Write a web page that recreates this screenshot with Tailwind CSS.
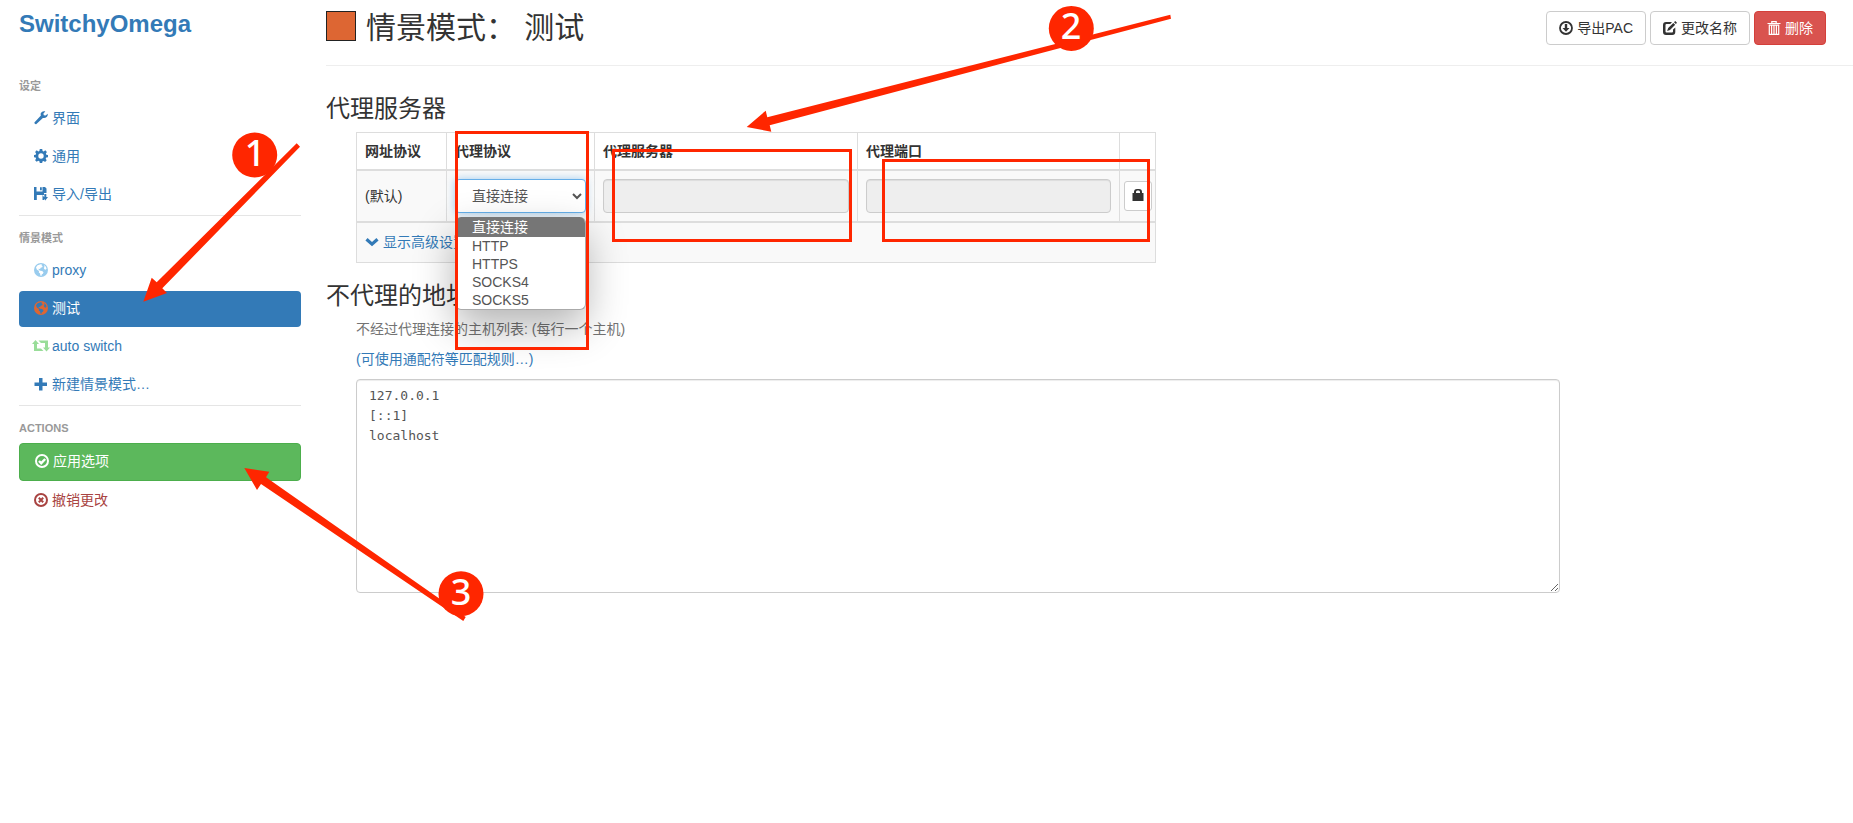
<!DOCTYPE html>
<html lang="zh-CN">
<head>
    <meta charset="UTF-8">
    <meta name="viewport" content="width=device-width, initial-scale=1.0">
    <title>SwitchyOmega</title>
    <script src="https://cdn.jsdelivr.net/npm/@tailwindcss/browser@4"></script>
</head>
<body class="relative flex min-h-screen bg-white font-['Liberation_Sans','Noto_Sans_CJK_SC',sans-serif] text-sm leading-5 text-[#333]">

    <!-- Sidebar -->
    <aside class="ml-[19px] w-[282px] shrink-0">
        <h1 class="h-[66px] pt-2 text-2xl leading-8 font-bold text-[#337ab7]"><a href="#">SwitchyOmega</a></h1>
        <nav class="flex flex-col gap-0.5 text-[#337ab7]">
            <h2 class="h-[33px] pt-2 text-[11px] leading-[25px] font-bold text-[#999]">设定</h2>
            <a href="#ui" class="flex h-9 items-center gap-1 rounded px-[15px] pb-0.5">
                <svg class="size-3.5" viewBox="0 0 14 14" fill="currentColor"><path d="M13.7 2.8 11.6 4.6 9.8 4.2 9.4 2.4 11.3.4C9.6-.3 7.6.4 6.9 2.1c-.4.9-.3 1.7 0 2.500L.6 11.3c-.8.8.9 2.6 1.8 1.8l6.500-6.200c2.600.8 5.300-1.300 4.800-4.100z"/></svg>
                界面
            </a>
            <a href="#general" class="flex h-9 items-center gap-1 rounded px-[15px] pb-0.5">
                <svg class="size-3.5" viewBox="0 0 14 14" fill="currentColor" fill-rule="evenodd"><path d="M5.8 0h2.4l.4 1.9 1.1.5 1.6-1.1 1.6 1.7-1 1.6.4 1.1 1.7.3v2.2l-1.8.4-.5 1.1 1 1.6-1.6 1.6-1.5-1-1.2.5L8.2 14H5.8l-.4-1.7-1.2-.5-1.5 1-1.6-1.6 1-1.6-.5-1.1L0 8.2V6l1.7-.3.4-1.1-1-1.6 1.6-1.7 1.6 1.1 1.1-.5zM7 4.3a2.7 2.7 0 1 0 0 5.4 2.7 2.7 0 0 0 0-5.4z"/></svg>
                通用
            </a>
            <a href="#io" class="flex h-9 items-center gap-1 rounded px-[15px] pb-0.5">
                <svg class="size-3.5" viewBox="0 0 14 14" fill="currentColor"><path d="M0 0h2.5v4.5h6V0H11l1.5 1.5V6H10v2H8.5L10 10v3H8.5V8H2.8v5H0zM6 .3h1.8v3H6zM10.3 7h2v3H14l-2.7 3.6L8.6 10h1.7z"/></svg>
                导入/导出
            </a>
            <hr class="border-[#e5e5e5]">
            <h2 class="h-[33px] pt-2 text-[11px] leading-[25px] font-bold text-[#999]">情景模式</h2>
            <a href="#proxy" class="flex h-9 items-center gap-1 rounded px-[15px] pb-0.5">
                <svg class="size-3.5 text-[#99ccee]" viewBox="0 0 14 14" fill="currentColor" fill-rule="evenodd"><path d="M7 0a7 7 0 1 0 0 14A7 7 0 0 0 7 0zM6.6 1.2 8 1.4 7.6 2.6 8.6 3l-.4 1.2-1.6.5-.5 1.3-1.5-.2.2 1.3 1.6.6 1.7.3 1.4 1.3-.6 1.5-1.2.8-.3 1.3-1-.3-.3-2-1.3-1.2.2-1.5L2.8 6.6 2 4.3l1.6-2zM10 2l1.7 1.5.9 2-.9 1.3-1.2-.6-.8-1.3.8-1z"/></svg>
                proxy
            </a>
            <a href="#test" class="flex h-9 items-center gap-1 rounded bg-[#337ab7] px-[15px] pb-0.5 text-white">
                <svg class="size-3.5 text-[#dd6633]" viewBox="0 0 14 14" fill="currentColor" fill-rule="evenodd"><path d="M7 0a7 7 0 1 0 0 14A7 7 0 0 0 7 0zM6.6 1.2 8 1.4 7.6 2.6 8.6 3l-.4 1.2-1.6.5-.5 1.3-1.5-.2.2 1.3 1.6.6 1.7.3 1.4 1.3-.6 1.5-1.2.8-.3 1.3-1-.3-.3-2-1.3-1.2.2-1.5L2.8 6.6 2 4.3l1.6-2zM10 2l1.7 1.5.9 2-.9 1.3-1.2-.6-.8-1.3.8-1z"/></svg>
                测试
            </a>
            <a href="#auto" class="flex h-9 items-center gap-0.5 rounded px-[13px] pb-0.5">
                <svg class="h-3 w-[18px] text-[#99dd99]" viewBox="0 0 18 12" fill="currentColor"><path d="M3.5 0 7 4H5v4.5h4L11.5 11H2V4H0zM6.5.5H16v7h2l-3.500 4L11 7.500h2V3H9z"/></svg>
                auto switch
            </a>
            <a href="#new" class="flex h-9 items-center gap-1 rounded px-[15px] pb-0.5">
                <svg class="size-3.5" viewBox="0 0 14 14" fill="currentColor"><path d="M5 1h3.5v4.5H13V9H8.5v4.5H5V9H.5V5.5H5z"/></svg>
                新建情景模式…
            </a>
            <hr class="border-[#e5e5e5]">
            <h2 class="h-[33px] pt-2 text-[11px] leading-[25px] font-bold text-[#999]">ACTIONS</h2>
            <button type="button" class="flex h-[38px] items-center gap-1 rounded border border-[#4cae4c] bg-[#5cb85c] px-[15px] pb-0.5 text-white">
                <svg class="size-3.5" viewBox="0 0 14 14" fill="none" stroke="currentColor" stroke-width="2"><circle cx="7" cy="7" r="6"/><path d="m4 7 2.2 2.2L10.200 5" stroke-width="2.4"/></svg>
                应用选项
            </button>
            <a href="#revert" class="flex h-9 items-center gap-1 rounded px-[15px] pb-0.5 text-[#a94442]">
                <svg class="size-3.5" viewBox="0 0 14 14" fill="none" stroke="currentColor" stroke-width="2"><circle cx="7" cy="7" r="6"/><path d="m4.8 4.8 4.4 4.4M9.2 4.8 4.8 9.2"/></svg>
                撤销更改
            </a>
        </nav>
    </aside>

    <!-- Profile -->
    <main class="ml-[25px] min-w-0 flex-1">
        <header class="flex items-start border-b border-[#eee] pt-[11px] pr-[27px] pb-5">
            <input type="button" aria-label="颜色" class="size-[30px] border border-[#222] bg-[#dd6633]">
            <h2 class="ml-2.5 flex-1 text-3xl leading-[34px]">情景模式： 测试</h2>
            <div class="flex gap-1">
                <button type="button" class="flex h-[34px] items-center gap-1 rounded border border-[#ccc] bg-white px-3">
                    <svg class="size-3.5" viewBox="0 0 14 14" fill="none" stroke="currentColor" stroke-width="1.8"><circle cx="7" cy="7" r="6"/><path d="M5.8 3h2.4v4h2.3L7 10.8 3.5 7h2.3z" fill="currentColor" stroke="none"/></svg>
                    导出PAC
                </button>
                <button type="button" class="flex h-[34px] items-center gap-1 rounded border border-[#ccc] bg-white px-3">
                    <svg class="size-3.5" viewBox="0 0 14 14" fill="currentColor"><path d="M9 1 7.3 3H3.500Q2.500 3 2.500 4v6.500q0 1 1 1H9q1 0 1-1V8.500l2.300-2V11q0 3-3 3H3q-3 0-3-3V4q0-3 3-3zM12.200 0 14 1.700 12.900 2.900 11 1.200zM10.300 1.900l1.900 1.800L7 9l-2.900.9L5.200 7z"/></svg>
                    更改名称
                </button>
                <button type="button" class="flex h-[34px] items-center gap-1 rounded border border-[#d43f3a] bg-[#d9534f] px-3 text-white">
                    <svg class="size-3.5" viewBox="0 0 14 14" fill="none" stroke="currentColor" stroke-width="1.2"><path d="M4.800 2V.6h4.400V2M.5 2.500h13M2.300 4v9.500h9.400V4M4.600 4v9M7 4v9M9.400 4v9M1.800 4.200h10.400M2 13.300h10"/></svg>
                    删除
                </button>
            </div>
        </header>

        <section class="pt-[30px]">
            <h3 class="mb-2.5 text-2xl leading-[26px]">代理服务器</h3>
            <table class="ml-[30px] w-[800px] table-fixed border-collapse border border-[#ddd]">
                <colgroup>
                    <col class="w-[90px]">
                    <col class="w-[148px]">
                    <col class="w-[263px]">
                    <col class="w-[262px]">
                    <col>
                </colgroup>
                <thead>
                    <tr class="h-[37px] text-left">
                        <th class="border border-b-2 border-[#ddd] p-2">网址协议</th>
                        <th class="border border-b-2 border-[#ddd] p-2">代理协议</th>
                        <th class="border border-b-2 border-[#ddd] p-2">代理服务器</th>
                        <th class="border border-b-2 border-[#ddd] p-2">代理端口</th>
                        <th class="border border-b-2 border-[#ddd] p-2"></th>
                    </tr>
                </thead>
                <tbody>
                    <tr class="bg-[#f9f9f9]">
                        <td class="border border-[#ddd] p-2">(默认)</td>
                        <td class="border border-[#ddd] p-2">
                            <div class="relative">
                                <select aria-label="代理协议" class="block h-[34px] w-full rounded border border-[#66afe9] bg-white px-3 text-[#555] shadow-[0_0_8px_rgba(102,175,233,0.6)] outline-none">
                                    <option>直接连接</option>
                                    <option>HTTP</option>
                                    <option>HTTPS</option>
                                    <option>SOCKS4</option>
                                    <option>SOCKS5</option>
                                </select>
                                <ul class="absolute inset-x-0 top-[38px] z-10 overflow-hidden rounded-md border border-t-0 border-[#aaa] bg-white leading-[18px] text-[#555] shadow-[0_16px_40px_rgba(0,0,0,0.3)]">
                                    <li class="bg-[#767676] px-4 leading-5 text-white">直接连接</li>
                                    <li class="px-4">HTTP</li>
                                    <li class="px-4">HTTPS</li>
                                    <li class="px-4">SOCKS4</li>
                                    <li class="px-4">SOCKS5</li>
                                </ul>
                            </div>
                        </td>
                        <td class="border border-[#ddd] p-2"><input type="text" aria-label="代理服务器" disabled class="block h-[34px] w-full rounded border border-[#ccc] bg-[#eee] px-3 shadow-[inset_0_1px_1px_rgba(0,0,0,0.075)]"></td>
                        <td class="border border-[#ddd] p-2"><input type="text" aria-label="代理端口" disabled class="block h-[34px] w-full rounded border border-[#ccc] bg-[#eee] px-3 shadow-[inset_0_1px_1px_rgba(0,0,0,0.075)]"></td>
                        <td class="border border-[#ddd] px-1">
                            <button type="button" aria-label="代理登录" class="flex h-[30px] w-7 items-center justify-center rounded-[3px] border border-[#ccc] bg-white pb-0.5">
                                <svg class="size-3" viewBox="0 0 12 12" fill="currentColor" fill-rule="evenodd"><path d="M2 4V3q0-3 3-3h2q3 0 3 3v1h1.5v8H.5V4zM4 4h4V3q0-1.500-1.200-1.500H5.200Q4 1.500 4 3z"/></svg>
                            </button>
                        </td>
                    </tr>
                </tbody>
                <tbody class="border-t-2 border-[#ddd]">
                    <tr class="h-10 bg-[#f9f9f9]">
                        <td colspan="5" class="px-2">
                            <a href="#advanced" class="flex items-center gap-1 text-[#337ab7]">
                                <svg class="size-3.5" viewBox="0 0 14 14" fill="none" stroke="currentColor" stroke-width="3.2"><path d="m1.5 4.200 5.500 5 5.500-5"/></svg>
                                显示高级设置
                            </a>
                        </td>
                    </tr>
                </tbody>
            </table>
        </section>

        <section class="pt-5">
            <h3 class="mb-2.5 text-2xl leading-[26px]">不代理的地址列表</h3>
            <div class="mr-[293px] ml-[30px] flex flex-col gap-2.5">
                <label for="bypass" class="text-[#737373]">不经过代理连接的主机列表: (每行一个主机)</label>
                <p><a href="#rules" class="text-[#337ab7]">(可使用通配符等匹配规则…)</a></p>
                <textarea id="bypass" rows="10" spellcheck="false" class="block w-full resize rounded border border-[#ccc] px-3 py-1.5 font-['DejaVu_Sans_Mono',monospace] text-[13px] leading-5 text-[#555] shadow-[inset_0_1px_1px_rgba(0,0,0,0.075)]">127.0.0.1
[::1]
localhost</textarea>
            </div>
        </section>
    </main>

    <!-- Numbered steps drawn over the page -->
    <svg class="pointer-events-none absolute top-0 left-0 z-20 h-[640px] w-[1200px]" viewBox="0 0 1200 640" fill="#ff2600">
        <g fill="none" stroke="#ff2600" stroke-width="3">
            <rect x="456.5" y="132.5" width="131" height="216"/>
            <rect x="613.5" y="150.5" width="237" height="90"/>
            <rect x="883.5" y="160.5" width="265" height="80"/>
        </g>
        <path d="M143.3 301.7 151.7 277.7 156.7 282.3 296.7 143.3 300 146.7 162.3 288.3 167 293z"/>
        <path d="M746.7 127 765.7 110.7 767.3 117.3 1170.3 14.7 1171 18.7 769.7 125.3 771.3 131.7z"/>
        <path d="M244.3 468 269.3 471.7 266 477.3 465.7 617 463.3 621 261 484 257 490z"/>
        <circle cx="254.7" cy="155" r="22.5"/>
        <circle cx="1071.3" cy="28.4" r="22.5"/>
        <circle cx="461" cy="593.7" r="22.5"/>
        <g fill="#fff" text-anchor="middle" class="font-['Noto_Sans',sans-serif] text-4xl font-medium">
            <text x="255" y="166">1</text>
            <text x="1071" y="39">2</text>
            <text x="461" y="605">3</text>
        </g>
    </svg>
</body>
</html>
